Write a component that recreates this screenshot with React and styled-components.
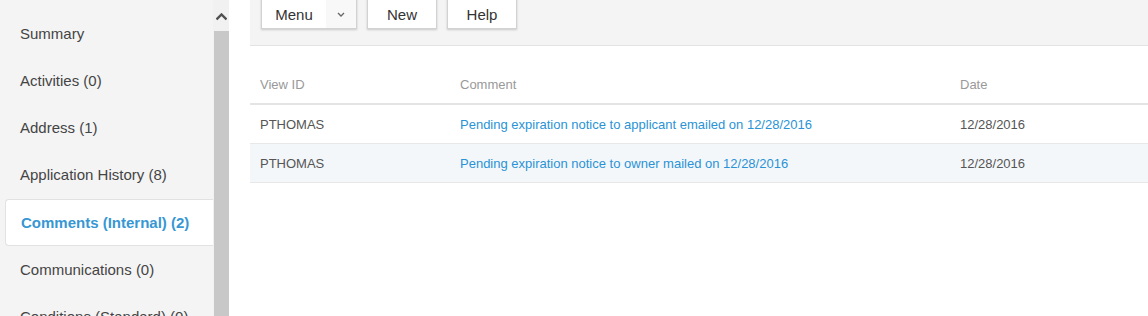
import React from 'react';
import styled, { createGlobalStyle } from 'styled-components';

const GlobalStyle = createGlobalStyle`
  html, body {
    margin: 0;
    padding: 0;
    background: #ffffff;
    font-family: Arial, "Liberation Sans", sans-serif;
    overflow: hidden;
  }
`;

const Page = styled.div`
  display: flex;
  height: 316px;
  overflow: hidden;
`;

// sidebar
const Sidebar = styled.div`
  display: flex;
  width: 229px;
  flex-shrink: 0;
  background: #f4f4f4;
`;

const NavList = styled.ul`
  list-style: none;
  margin: 0;
  padding: 10px 0 0 5px;
  width: 208px;
`;

const NavItem = styled.li`
  height: 47px;
  box-sizing: border-box;
  display: flex;
  align-items: center;
  margin-top: ${({ $active }) => ($active ? '1px' : '0')};
  padding-left: ${({ $active }) => ($active ? '15px' : '14px')};
  font-size: 15px;
  color: ${({ $active }) => ($active ? '#3797d3' : '#444')};
  font-weight: ${({ $active }) => ($active ? 'bold' : 'normal')};
  background: ${({ $active }) => ($active ? '#ffffff' : 'transparent')};
  border: 1px solid ${({ $active }) => ($active ? '#e2e2e2' : 'transparent')};
  border-right: none;
  border-radius: 4px 0 0 4px;
  white-space: nowrap;
`;

const Scrollbar = styled.div`
  width: 16px;
  display: flex;
  flex-direction: column;
  background: #f1f1f1;
`;

const ScrollArrow = styled.div`
  height: 31px;
  display: flex;
  justify-content: center;
  padding-top: 13px;
  box-sizing: border-box;
`;

const ScrollThumb = styled.div`
  flex: 1;
  margin-left: 1px;
  background: #c8c8c8;
`;

// main
const Main = styled.div`
  flex: 1;
  padding-left: 21px;
  min-width: 0;
`;

const Toolbar = styled.div`
  height: 46px;
  box-sizing: border-box;
  display: flex;
  align-items: flex-end;
  gap: 10px;
  padding: 0 0 16px 11px;
  background: #f4f4f4;
  border-bottom: 1px solid #e3e3e3;
`;

const Button = styled.div`
  height: 34px;
  width: ${({ $w }) => $w}px;
  box-sizing: border-box;
  display: flex;
  align-items: center;
  justify-content: center;
  padding-top: 4px;
  background: #ffffff;
  border: 1px solid #d2d2d2;
  box-shadow: 0 1px 2px rgba(0, 0, 0, 0.18);
  font-size: 15px;
  color: #333;
`;

const SplitButton = styled(Button)`
  justify-content: flex-start;
  align-items: stretch;
  padding-top: 0;
`;

const SplitLabel = styled.span`
  width: 64px;
  display: flex;
  align-items: center;
  justify-content: center;
  padding-top: 4px;
`;

const SplitCaret = styled.span`
  flex: 1;
  display: flex;
  align-items: center;
  justify-content: center;
  padding-top: 5px;
  background: #f8f8f8;
`;

const Table = styled.table`
  margin-top: 19px;
  width: 100%;
  border-collapse: collapse;
  font-size: 13px;
`;

const HeadCell = styled.th`
  height: 39px;
  padding: 0 10px;
  text-align: left;
  font-weight: normal;
  color: #999;
  border-bottom: 2px solid #e4e4e4;
  width: ${({ $w }) => ($w ? `${$w}px` : 'auto')};
  box-sizing: border-box;
`;

const Row = styled.tr`
  background: ${({ $alt }) => ($alt ? '#f4f7fa' : '#ffffff')};
`;

const Cell = styled.td`
  height: 38px;
  padding: 0 10px;
  color: ${({ $link }) => ($link ? '#2a93d6' : '#555')};
  border-bottom: 1px solid #e8e8e8;
  white-space: nowrap;
`;

const navItems = [
  'Summary',
  'Activities (0)',
  'Address (1)',
  'Application History (8)',
  'Comments (Internal) (2)',
  'Communications (0)',
  'Conditions (Standard) (0)',
];

const rows = [
  { id: 'PTHOMAS', comment: 'Pending expiration notice to applicant emailed on 12/28/2016', date: '12/28/2016' },
  { id: 'PTHOMAS', comment: 'Pending expiration notice to owner mailed on 12/28/2016', date: '12/28/2016' },
];

const App = () => (
  <Page>
    <GlobalStyle />
    <Sidebar>
      <NavList>
        {navItems.map((label) => (
          <NavItem key={label} $active={label.startsWith('Comments')}>
            {label}
          </NavItem>
        ))}
      </NavList>
      <Scrollbar>
        <ScrollArrow>
          <svg width="11" height="8" viewBox="0 0 11 8">
            <path d="M0.5 6.5 L5.5 1.5 L10.5 6.5" fill="none" stroke="#505050" strokeWidth="2.4" />
          </svg>
        </ScrollArrow>
        <ScrollThumb />
      </Scrollbar>
    </Sidebar>
    <Main>
      <Toolbar>
        <SplitButton $w={96}>
          <SplitLabel>Menu</SplitLabel>
          <SplitCaret>
            <svg width="8" height="5" viewBox="0 0 8 5">
              <path d="M1 1 L4 4 L7 1" fill="none" stroke="#666" strokeWidth="1.3" />
            </svg>
          </SplitCaret>
        </SplitButton>
        <Button $w={70}>New</Button>
        <Button $w={70}>Help</Button>
      </Toolbar>
      <Table>
        <thead>
          <tr>
            <HeadCell $w={200}>View ID</HeadCell>
            <HeadCell $w={500}>Comment</HeadCell>
            <HeadCell>Date</HeadCell>
          </tr>
        </thead>
        <tbody>
          {rows.map((r, i) => (
            <Row key={i} $alt={i % 2 === 1}>
              <Cell>{r.id}</Cell>
              <Cell $link>{r.comment}</Cell>
              <Cell>{r.date}</Cell>
            </Row>
          ))}
        </tbody>
      </Table>
    </Main>
  </Page>
);

export default App;
